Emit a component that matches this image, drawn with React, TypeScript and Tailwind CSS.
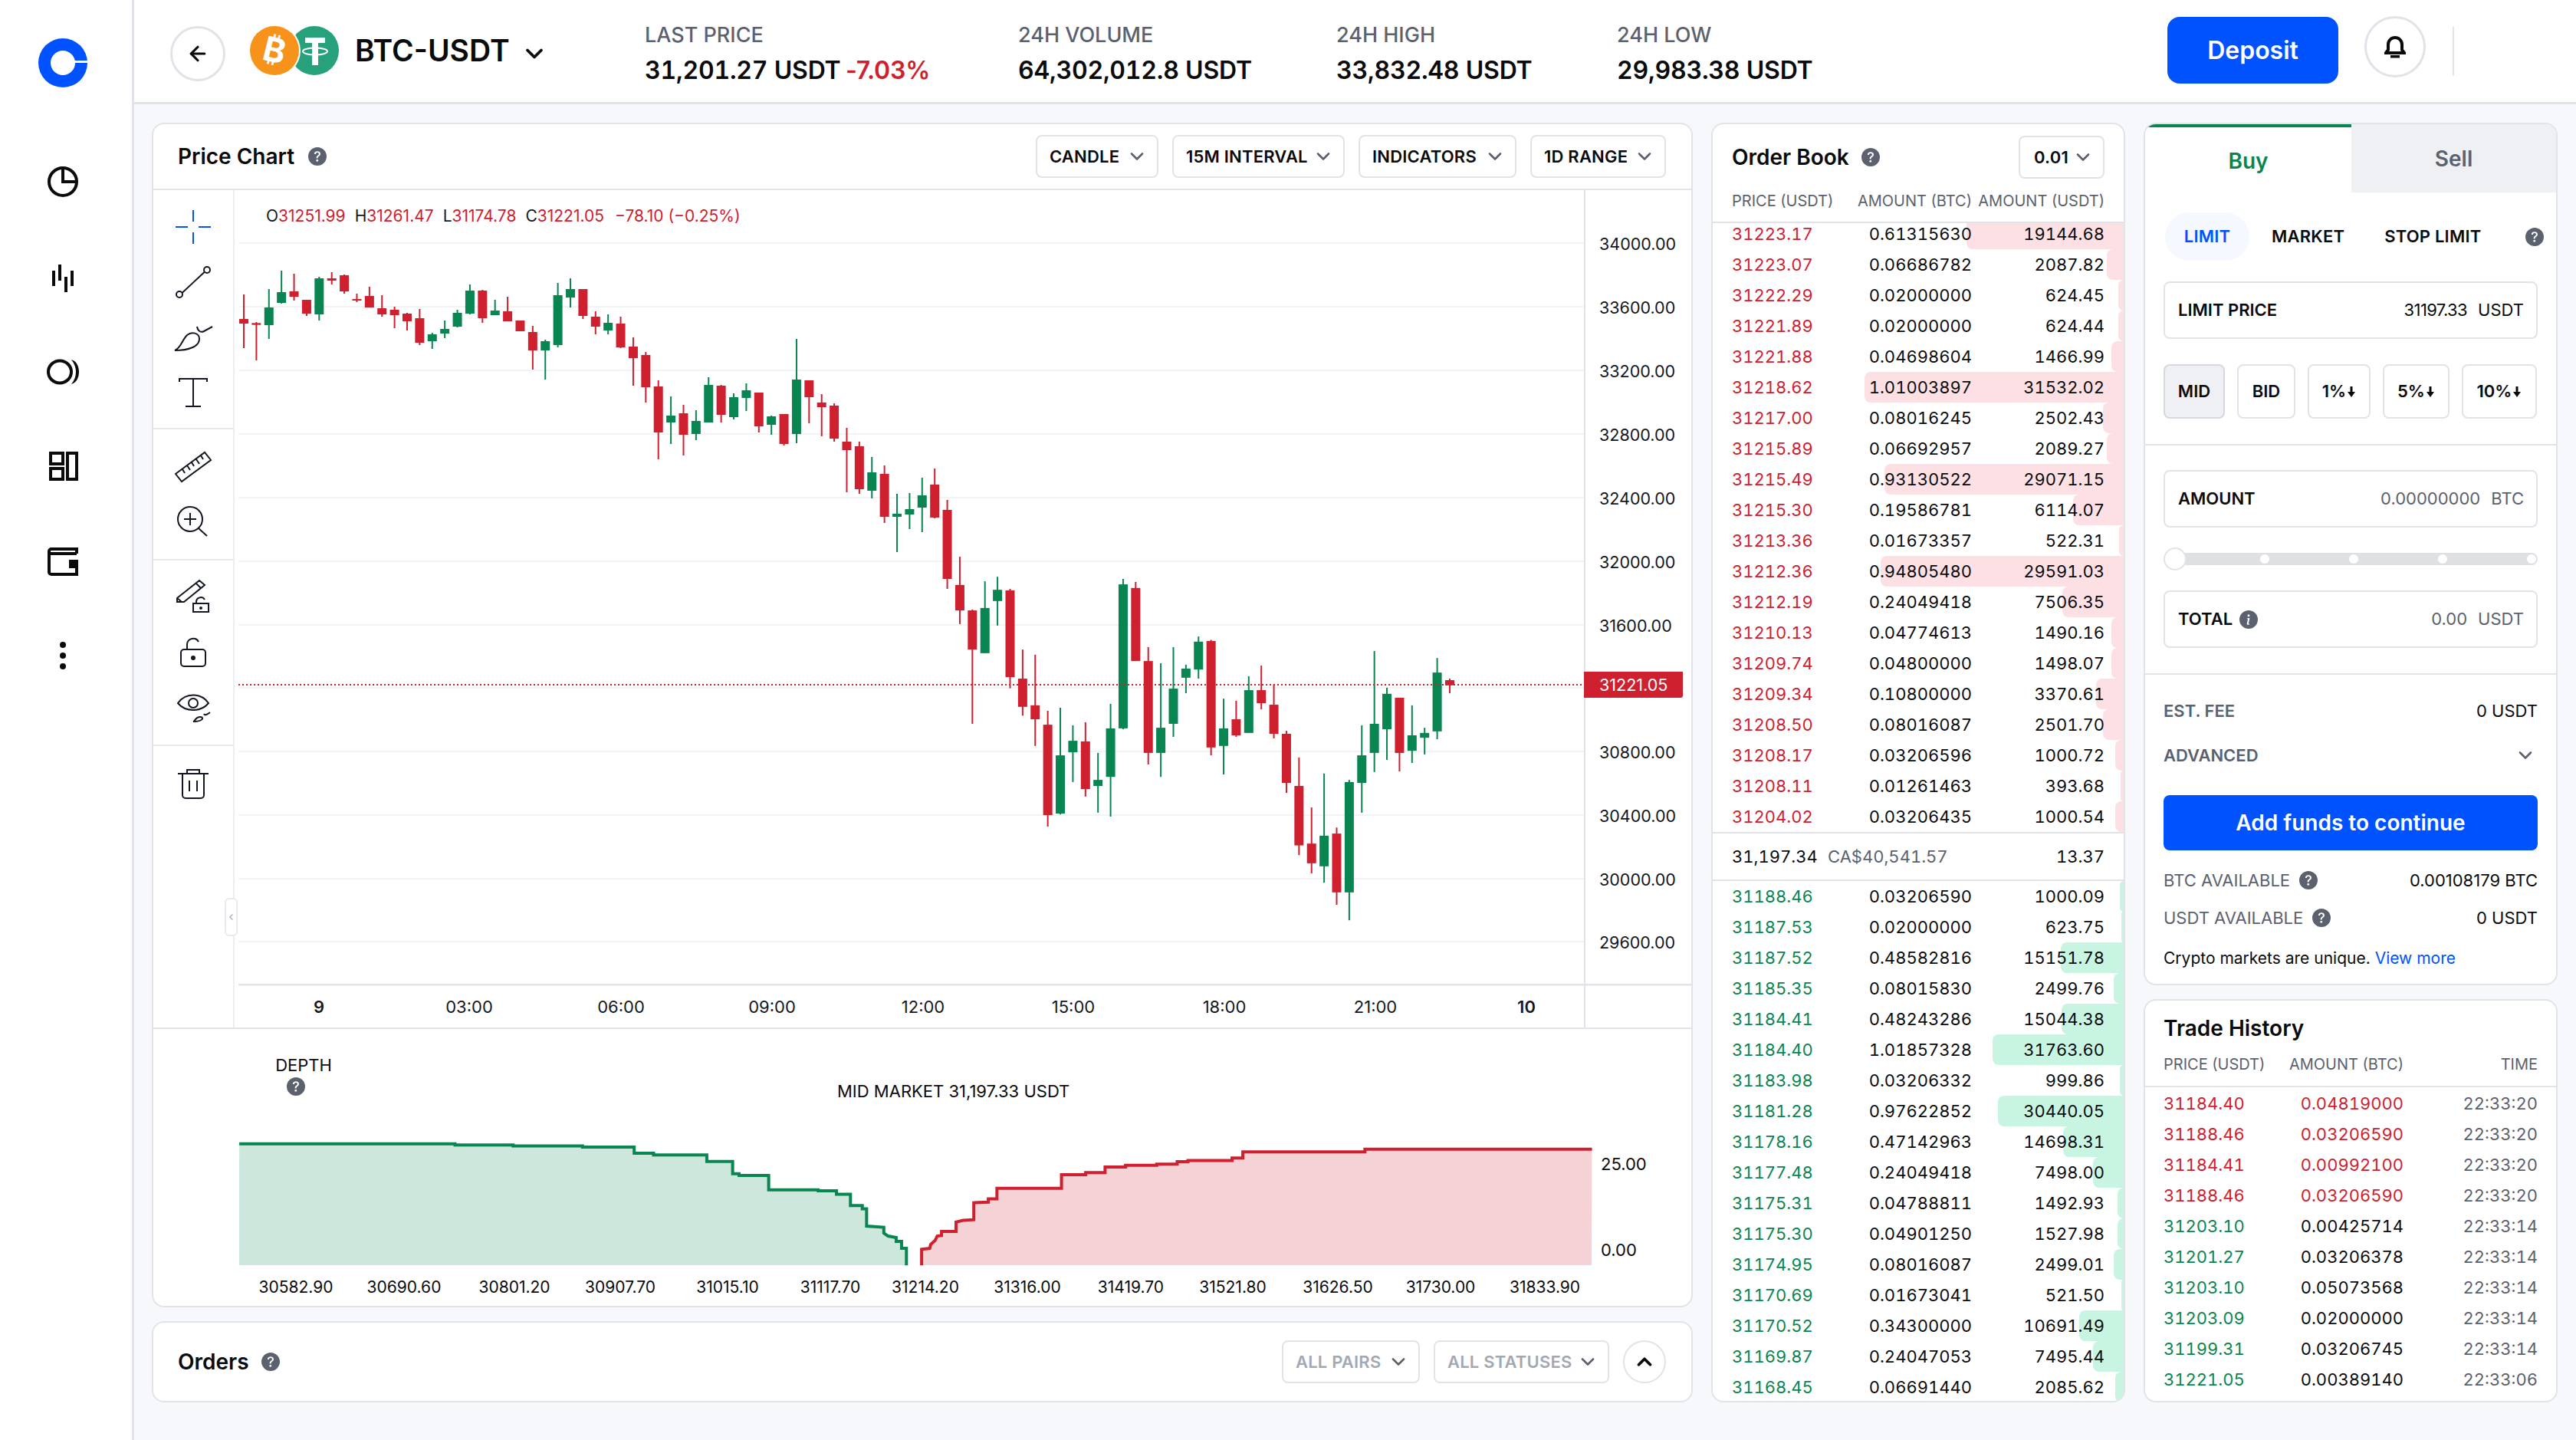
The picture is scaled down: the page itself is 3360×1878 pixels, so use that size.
import { BsInfoCircleFill, BsQuestionCircleFill } from 'react-icons/bs'
import { ArrowLeft, ChevronDown, ChevronLeft, ChevronUp } from 'lucide-react'

// candle rows: [green?, wick top, body top, body bottom, wick bottom], as measured off the chart
type Candle = [number, number, number, number, number]
const firstCandles: Candle[] = [
  [0,192,288,306,402],[0,300,304,311,450],[1,171,243,312,366],[1,99,183,225,228],[0,111,180,201,216],
  [0,213,213,267,276],[1,123,129,270,294],[0,105,129,138,153],[0,114,117,180,189],[0,189,210,216,222],
  [0,162,198,243,243],[0,195,246,270,279],[0,240,252,273,324],[0,264,267,297,333],[0,249,285,381,390],
  [1,342,348,375,405],[1,294,327,345,363],[1,252,264,318,321],[1,153,177,267,270],[0,174,177,285,303],
  [1,213,255,273,273],[0,201,258,297,297],[0,294,294,336,336],[0,315,339,411,486],[1,369,375,411,525],
  [1,147,195,390,399],[1,129,171,204,243],[0,171,171,276,288],[0,258,279,318,348],[1,270,303,333,348],
  [0,279,306,399,402],[0,360,396,441,549],[0,417,429,555,615],[0,528,552,732,837],[1,591,666,693,777],
  [0,624,657,741,822],[1,645,687,738,762],[1,516,546,693,693],[0,546,549,663,693],[1,579,594,672,681],
  [1,540,567,597,648],[0,576,576,708,732],[1,666,669,702,741],[0,660,660,777,783],[1,366,525,738,774],
  [0,528,528,594,696],[0,582,615,633,747],[0,618,627,756,768],
]
const midCandles: Candle[] = [
  [0,414,468,501,666],[0,468,486,654,672],[1,528,588,660,690],[0,561,594,762,786],[1,672,750,762,900],
  [1,669,732,753,810],[1,609,678,726,822],[0,573,636,765,768],[0,696,735,1005,1044],
]
const lastCandles: Candle[] = [
  [0,66,159,243,288],[0,240,243,372,617],[1,147,235,384,384],[1,132,175,212,293],[0,172,177,463,500],
  [0,372,468,561,590],[0,389,556,602,690],[0,574,620,918,956],[1,564,721,913,916],[1,622,673,711,809],
  [0,612,675,832,857],[1,713,802,822,910],[1,551,632,792,923],[1,139,157,632,635],[0,149,169,410,410],
  [0,364,410,713,751],[1,417,630,713,792],[1,364,501,617,660],[1,422,435,465,516],[1,329,346,438,468],
  [0,340,344,695,721],[1,534,632,690,784],[0,541,602,655,660],[1,460,506,647,647],[0,425,506,549,569],
  [0,487,554,650,665],[0,640,650,812,845],[0,728,822,1018,1050],[0,893,1012,1077,1110],[1,781,986,1087,1141],
  [0,959,979,1173,1214],[1,802,809,1173,1265],[1,622,721,812,910],[1,377,617,713,776],[1,498,518,635,736],
  [0,531,531,713,774],[1,556,655,706,746],[1,630,647,663,718],[1,400,448,642,668],[0,468,473,490,516],
]
const conv = (c: Candle, off: number, sc: number) =>
  [c[0], off + c[1] / sc, off + c[2] / sc, off + c[3] / sc, off + c[4] / sc]
const candles = [
  ...firstCandles.map((c) => conv(c, 320, 3)),
  ...midCandles.map((c) => conv(c, 420, 3)),
  ...lastCandles.map((c) => conv(c, 700, 2.529)),
]

const gridY = [317, 400, 483, 566, 649, 732, 815, 897, 980, 1063, 1146, 1228]
const priceLabels = ['34000.00','33600.00','33200.00','32800.00','32400.00','32000.00','31600.00','','30800.00','30400.00','30000.00','29600.00']
const timeLabels: [string, number, boolean][] = [
  ['9',416,true],['03:00',612,false],['06:00',810,false],['09:00',1007,false],['12:00',1204,false],
  ['15:00',1400,false],['18:00',1597,false],['21:00',1794,false],['10',1991,true],
]
const depthLabels: [string, number][] = [
  ['30582.90',386],['30690.60',527],['30801.20',671],['30907.70',809],['31015.10',949],['31117.70',1083],
  ['31214.20',1207],['31316.00',1340],['31419.70',1475],['31521.80',1608],['31626.50',1745],['31730.00',1879],['31833.90',2015],
]

const greenSteps = [[174,555],[575,555],[575,559],[683,559],[683,562],[812,562],[812,566],[908,566],[908,587],[944,587],[944,593],[1043,593],[1043,615],[1091,615],[1091,657],[1103,657],[1103,663],[1158,663],[1158,712],[1250,712],[1250,715],[1284,715],[1284,727],[1310,727],[1310,766],[1332,766],[1332,777],[1340,777],[1340,836],[1372,840],[1372,860],[1380,870],[1395,875],[1395,888],[1405,888],[1405,912],[1414,912],[1414,970]]
const redSteps = [[3,970],[3,915],[18,912],[20,898],[28,885],[32,870],[40,868],[40,854],[67,854],[67,822],[80,816],[100,814],[100,756],[127,754],[127,743],[143,743],[143,707],[263,707],[263,660],[308,660],[308,653],[344,653],[344,634],[382,634],[382,628],[440,628],[440,624],[478,624],[478,616],[498,616],[498,612],[580,612],[580,603],[600,603],[600,582],[827,582],[827,573],[1249,573]]
const greenPts = greenSteps.map(([x, y]) => `${190 + x / 1.425},${1280 + y / 2.62}`).join(' ')
const redPts = redSteps.map(([x, y]) => `${1200 + x / 1.425},${1280 + y / 2.62}`).join(' ')

const asks = [
  ['31223.17','0.61315630','19144.68'],['31223.07','0.06686782','2087.82'],['31222.29','0.02000000','624.45'],
  ['31221.89','0.02000000','624.44'],['31221.88','0.04698604','1466.99'],['31218.62','1.01003897','31532.02'],
  ['31217.00','0.08016245','2502.43'],['31215.89','0.06692957','2089.27'],['31215.49','0.93130522','29071.15'],
  ['31215.30','0.19586781','6114.07'],['31213.36','0.01673357','522.31'],['31212.36','0.94805480','29591.03'],
  ['31212.19','0.24049418','7506.35'],['31210.13','0.04774613','1490.16'],['31209.74','0.04800000','1498.07'],
  ['31209.34','0.10800000','3370.61'],['31208.50','0.08016087','2501.70'],['31208.17','0.03206596','1000.72'],
  ['31208.11','0.01261463','393.68'],['31204.02','0.03206435','1000.54'],
]
const bids = [
  ['31188.46','0.03206590','1000.09'],['31187.53','0.02000000','623.75'],['31187.52','0.48582816','15151.78'],
  ['31185.35','0.08015830','2499.76'],['31184.41','0.48243286','15044.38'],['31184.40','1.01857328','31763.60'],
  ['31183.98','0.03206332','999.86'],['31181.28','0.97622852','30440.05'],['31178.16','0.47142963','14698.31'],
  ['31177.48','0.24049418','7498.00'],['31175.31','0.04788811','1492.93'],['31175.30','0.04901250','1527.98'],
  ['31174.95','0.08016087','2499.01'],['31170.69','0.01673041','521.50'],['31170.52','0.34300000','10691.49'],
  ['31169.87','0.24047053','7495.44'],['31168.45','0.06691440','2085.62'],
]
const trades = [
  ['31184.40','0.04819000','22:33:20',0],['31188.46','0.03206590','22:33:20',0],['31184.41','0.00992100','22:33:20',0],
  ['31188.46','0.03206590','22:33:20',0],['31203.10','0.00425714','22:33:14',1],['31201.27','0.03206378','22:33:14',1],
  ['31203.10','0.05073568','22:33:14',1],['31203.09','0.02000000','22:33:14',1],['31199.31','0.03206745','22:33:14',1],
  ['31221.05','0.00389140','22:33:06',1],
]

const Help = ({ size = 24 }: { size?: number }) => <BsQuestionCircleFill size={size} className="text-[#5b616e] shrink-0" />

function SideIcon({ children }: { children: React.ReactNode }) {
  return (
    <svg width="44" height="44" viewBox="0 0 44 44" className="mb-[80px] text-[#0a0b0d]">
      {children}
    </svg>
  )
}

function ToolIcon({ children, className = '' }: { children: React.ReactNode; className?: string }) {
  return (
    <svg width="48" height="48" viewBox="0 0 48 48" fill="none" stroke="currentColor" strokeWidth="2" overflow="visible" className={'text-[#131722] ' + className}>
      {children}
    </svg>
  )
}

function Sidebar() {
  return (
    <aside className="w-[175px] shrink-0 bg-white border-r-[3px] border-[#e1e3e8] flex flex-col items-center pt-[50px] pr-[8px]">
      <svg width="64" height="64" viewBox="0 0 64 64" className="mb-[101px]">
        <circle cx="32" cy="32" r="32" fill="#0052ff" />
        <circle cx="32" cy="32" r="16" fill="#fff" />
        <rect x="32" y="29" width="32" height="3" fill="#fff" />
      </svg>
      <SideIcon>
        <circle cx="22" cy="22" r="18" fill="none" stroke="currentColor" strokeWidth="4" />
        <path d="M22 4V22H40" fill="none" stroke="currentColor" strokeWidth="4" />
      </SideIcon>
      <SideIcon>
        <path d="M8 14h4v20H8zM16 6h4v21h-4zM24 22h4v20h-4zM32 14h4v20h-4z" fill="currentColor" />
      </SideIcon>
      <SideIcon>
        <ellipse cx="18" cy="22" rx="15" ry="14.5" fill="none" stroke="currentColor" strokeWidth="4" />
        <path d="M33 6c7 2 10 9 10 16s-3 14-10 16c4-5 6-10 6-16S37 11 33 6Z" fill="currentColor" />
      </SideIcon>
      <SideIcon>
        <path d="M6 4h16v14H6zM6 24h16v14H6zM28 4h12v34H28z" fill="none" stroke="currentColor" strokeWidth="4" />
      </SideIcon>
      <SideIcon>
        <path d="M40 11H4v24a3 3 0 0 0 3 3h33V30M4 14V8a3 3 0 0 1 3-3h33v6" fill="none" stroke="currentColor" strokeWidth="4" />
        <path d="M30 19h12v11H30z" fill="currentColor" />
      </SideIcon>
      <svg width="10" height="40" viewBox="0 0 10 40" className="text-[#0a0b0d]">
        <circle cx="5" cy="6" r="4" fill="currentColor" />
        <circle cx="5" cy="20" r="4" fill="currentColor" />
        <circle cx="5" cy="34" r="4" fill="currentColor" />
      </svg>
    </aside>
  )
}

function Stat({ label, width, children }: { label: string; width: string; children: React.ReactNode }) {
  return (
    <div className={'shrink-0 mt-[30px] ' + width}>
      <div className="text-[27px] leading-[32px] text-[#5b616e] font-medium">{label}</div>
      <div className="mt-[10px] text-[32px] leading-[40px] font-semibold text-[#0a0b0d] tabular-nums tracking-[-0.2px]">{children}</div>
    </div>
  )
}

function Header() {
  return (
    <header className="h-[136px] shrink-0 bg-white border-b-[3px] border-[#e1e3e8] flex items-start">
      <div className="ml-[47px] w-[619px] shrink-0 flex items-start">
        <button className="mt-[34px] w-[72px] h-[72px] rounded-full border-[3px] border-[#e1e3e8] flex items-center justify-center">
          <ArrowLeft size={30} strokeWidth={2.5} className="text-[#0a0b0d]" />
        </button>
        <svg width="116" height="64" viewBox="0 0 116 64" className="mt-[34px] ml-[32px]">
          <circle cx="84" cy="32" r="32" fill="#26a17b" />
          <path d="M72 15h26v7h-9v29h-8V22h-9z" fill="#fff" />
          <ellipse cx="85" cy="33" rx="16" ry="4.500" fill="none" stroke="#fff" strokeWidth="2" />
          <circle cx="32" cy="32" r="34" fill="#fff" />
          <circle cx="32" cy="32" r="32" fill="#f7931a" />
          <text x="32" y="47" textAnchor="middle" fontSize="44" fontWeight="700" fill="#fff" transform="rotate(14 32 32)">₿</text>
        </svg>
        <span className="mt-[41px] ml-[21px] text-[39px] leading-[50px] font-semibold text-[#0a0b0d]">BTC-USDT</span>
        <ChevronDown size={36} strokeWidth={2.5} className="mt-[52px] ml-[14px] text-[#0a0b0d]" />
      </div>
      <Stat label="LAST PRICE" width="w-[487px]">
        31,201.27 USDT <span className="text-[#cf202f] [font-variant-numeric:normal] -ml-[2px]">-7.03%</span>
      </Stat>
      <Stat label="24H VOLUME" width="w-[415px]">64,302,012.8 USDT</Stat>
      <Stat label="24H HIGH" width="w-[366px]">33,832.48 USDT</Stat>
      <Stat label="24H LOW" width="w-[400px]">29,983.38 USDT</Stat>
      <button className="mt-[22px] ml-auto w-[223px] h-[87px] rounded-[16px] bg-[#0052ff] text-white text-[32px] font-semibold">Deposit</button>
      <button className="mt-[21px] ml-[34px] w-[80px] h-[80px] rounded-full border-[3px] border-[#e1e3e8] flex items-center justify-center">
        <svg width="28" height="30" viewBox="0 0 28 30">
          <path d="M14 3a9 9 0 0 0-9 9v7l-3 4h24l-3-4v-7a9 9 0 0 0-9-9Z" fill="none" stroke="#0a0b0d" strokeWidth="4" />
          <path d="M8 26h12v3.500H8z" fill="#0a0b0d" />
        </svg>
      </button>
      <div className="mt-[35px] ml-[35px] mr-[159px] w-[2px] h-[64px] bg-[#e1e3e8]" />
    </header>
  )
}

function Select({ label, muted = false, className = '' }: { label: string; muted?: boolean; className?: string }) {
  return (
    <div className={'h-[56px] rounded-[8px] border-[2px] border-[#e1e3e8] flex items-center justify-between pl-[16px] pr-[12px] text-[22px] font-semibold tracking-[0.2px] ' + (muted ? 'text-[#a3a8b3] ' : 'text-[#0a0b0d] ') + className}>
      <span>{label}</span>
      <ChevronDown size={28} strokeWidth={2.25} className="text-[#5b616e]" />
    </div>
  )
}

function Toolbar() {
  return (
    <div className="w-[106px] shrink-0 border-r-[2px] border-[#eceef2] flex flex-col items-center">
      <div className="w-full h-[312px] border-b-[2px] border-[#e8eaf0] flex flex-col items-center pt-[24px] gap-[24px]">
        <ToolIcon className="!text-[#0052ff]"><path d="M1 24H17M31 24H47M24 2V17M24 31V46" /></ToolIcon>
        <ToolIcon><circle cx="6" cy="40" r="4" /><circle cx="42" cy="8" r="4" /><path d="M9.500 38 39 10.500" /></ToolIcon>
        <ToolIcon><path d="M0 41c8-3 9-13 16-20 6-5 16-3 16 5 0 10-14 15-32 15Z" /><path d="M29 10c1 6 5 8 9 6l11-6" /></ToolIcon>
        <ToolIcon><path d="M6 10V6H42V10M24 6V42M14 42H34" /></ToolIcon>
      </div>
      <div className="w-full h-[171px] border-b-[2px] border-[#e8eaf0] flex flex-col items-center pt-[24px] gap-[22px]">
        <ToolIcon><path d="M1 34 39 6l8 10L9 44ZM10 28l3 5M16 23l4 6M22 19l3 5M28 15l4 6M34 10l3 5" /></ToolIcon>
        <ToolIcon><circle cx="20" cy="23" r="16" /><path d="M12 23H28M20 15V31M31 35l11 10" /></ToolIcon>
      </div>
      <div className="w-full h-[242px] border-b-[2px] border-[#e8eaf0] flex flex-col items-center pt-[22px] gap-[24px]">
        <ToolIcon><path d="M3 27 32 4l7 6-27 22H3ZM3 27l6 5M28 8l6 6" /><path d="M24 34h20v11H24zM28 34v-3a6 6 0 0 1 11-2" /><circle cx="34" cy="40" r="1" fill="currentColor" /></ToolIcon>
        <ToolIcon><rect x="8" y="22" width="32" height="22" rx="4" /><path d="M16 22v-7a8 8 0 0 1 15-3" /><circle cx="24" cy="33" r="2" fill="currentColor" /></ToolIcon>
        <ToolIcon><path d="M4 20c10-14 30-14 40 0-10 12-30 12-40 0Z" /><circle cx="24" cy="20" r="6" /><path d="M24 44c3-1 3-6 9-6 5 0 5 6-9 6ZM38 34c1 2 3 2 8-2" /></ToolIcon>
      </div>
      <div className="pt-[26px]">
        <ToolIcon><path d="M4 10H44M16 10V5h16v5M10 10v28a4 4 0 0 0 4 4h20a4 4 0 0 0 4-4V10M19 19v14M29 19v14" /></ToolIcon>
      </div>
    </div>
  )
}

function PriceChart() {
  return (
    <div className="relative flex-1">
      {/* viewBox uses page pixels, so candle values read straight off the chart */}
      <svg width="1900" height="1092" viewBox="306 248 1900 1092" className="block">
        {gridY.map((y) => (
          <rect key={y} x="311" y={y - 1} width="1755" height="2" fill="#f2f3f5" />
        ))}
        {candles.map((c, i) => {
          const x = 318 + i * 16.385
          const col = c[0] ? '#098551' : '#cf202f'
          return (
            <g key={i} fill={col}>
              <rect x={x - 1} y={c[1]} width="2" height={c[4] - c[1]} />
              <rect x={x - 6} y={c[2]} width="12" height={c[3] - c[2]} />
            </g>
          )
        })}
        <line x1="311" x2="2066" y1="893" y2="893" stroke="#cf202f" strokeWidth="2" strokeDasharray="2 3" />
        <rect x="311" y="1283" width="1895" height="2.500" fill="#e1e3e8" />
        <rect x="2066" y="248" width="2" height="1092" fill="#e1e3e8" />
        {priceLabels.map((t, i) => (
          <text key={i} x="2086" y={gridY[i] + 9} fontSize="21.500" fill="#131722">{t}</text>
        ))}
        <path d="M2066 876H2195V907a3 3 0 0 1-3 3H2066Z" fill="#cf202f" />
        <text x="2086" y="901" fontSize="21.500" fill="#fff">31221.05</text>
        {timeLabels.map(([t, x, bold]) => (
          <text key={t} x={x} y="1321" textAnchor="middle" fontSize="22" fontWeight={bold ? 600 : 400} fill="#131722">{t}</text>
        ))}
      </svg>
      <div className="absolute left-[41px] top-[20px] text-[21px] leading-[28px] flex gap-[12px] text-[#cf202f] whitespace-nowrap">
        <span><span className="text-[#131722]">O</span>31251.99</span>
        <span><span className="text-[#131722]">H</span>31261.47</span>
        <span><span className="text-[#131722]">L</span>31174.78</span>
        <span><span className="text-[#131722]">C</span>31221.05</span>
        <span className="ml-[2px]">−78.10 (−0.25%)</span>
      </div>
      <div className="absolute -left-[13px] top-[923px] w-[17px] h-[50px] rounded-[6px] bg-white border-[2px] border-[#e8eaf0] flex items-center justify-center">
        <ChevronLeft size={14} className="text-[#a3a8b3]" />
      </div>
    </div>
  )
}

function DepthChart() {
  return (
    <svg width="2006" height="361" viewBox="200 1342 2006 361" className="block">
      <text x="396" y="1397" textAnchor="middle" fontSize="22" fill="#0a0b0d">DEPTH</text>
      <BsQuestionCircleFill x={374} y={1405} size={24} color="#5b616e" />
      <text x="1092" y="1431" fontSize="22" fill="#0a0b0d">MID MARKET 31,197.33 USDT</text>
      <polygon points={`312,1650 ${greenPts} 1183,1650`} fill="#cde7dc" />
      <polyline points={greenPts} fill="none" stroke="#098551" strokeWidth="4" />
      <polygon points={`1202,1650 ${redPts} 2076,1650`} fill="#f5d2d6" />
      <polyline points={redPts} fill="none" stroke="#cf202f" strokeWidth="4" />
      <text x="2088" y="1526" fontSize="22" fill="#0a0b0d">25.00</text>
      <text x="2088" y="1638" fontSize="22" fill="#0a0b0d">0.00</text>
      {depthLabels.map(([t, x]) => (
        <text key={t} x={x} y="1686" textAnchor="middle" fontSize="21" fill="#0a0b0d">{t}</text>
      ))}
    </svg>
  )
}

function BookRow({ row, side }: { row: string[]; side: 'ask' | 'bid' }) {
  const w = parseFloat(row[2]) * (side === 'ask' ? 0.01072 : 0.00538)
  return (
    <div className="relative h-[40px] flex items-center pl-[25px] pr-[25px] text-[22px] tabular-nums">
      <div
        className={'absolute right-0 top-0 h-full rounded-l-[8px] ' + (side === 'ask' ? 'bg-[#fde0e3]' : 'bg-[#c8f5e1]')}
        style={{ width: w }}
      />
      <span className={'relative w-[160px] ' + (side === 'ask' ? 'text-[#cf202f]' : 'text-[#098551]')}>{row[0]}</span>
      <span className="relative w-[153px] text-right text-[#0a0b0d]">{row[1]}</span>
      <span className="relative flex-1 text-right text-[#0a0b0d]">{row[2]}</span>
    </div>
  )
}

function OrderBook() {
  return (
    <section className="w-[540px] h-[1669px] shrink-0 bg-white rounded-[16px] border-[2px] border-[#e1e3e8] flex flex-col overflow-hidden">
      <div className="h-[129px] shrink-0 border-b-[2px] border-[#e1e3e8] px-[25px]">
        <div className="flex items-center h-[86px]">
          <span className="text-[28px] font-semibold text-[#0a0b0d]">Order Book</span>
          <span className="ml-[16px]"><Help /></span>
          <Select label="0.01" className="ml-auto w-[112px] !pl-[18px]" />
        </div>
        <div className="flex text-[20px] text-[#5b616e] leading-[28px] whitespace-nowrap">
          <span className="w-[160px]">PRICE (USDT)</span>
          <span className="w-[153px] text-right">AMOUNT (BTC)</span>
          <span className="flex-1 text-right">AMOUNT (USDT)</span>
        </div>
      </div>
      <div className="h-[794px] shrink-0 overflow-hidden">
        <div className="-mt-[6px]">
          {asks.map((r) => <BookRow key={r[0] + r[1]} row={r} side="ask" />)}
        </div>
      </div>
      <div className="h-[64px] shrink-0 border-y-[2px] border-[#e1e3e8] flex items-center px-[25px] text-[22px] tabular-nums">
        <span className="text-[#0a0b0d] w-[125px]">31,197.34</span>
        <span className="text-[#5b616e]">CA$40,541.57</span>
        <span className="ml-auto text-[#0a0b0d]">13.37</span>
      </div>
      <div className="flex-1 overflow-hidden">
        {bids.map((r) => <BookRow key={r[0] + r[1]} row={r} side="bid" />)}
      </div>
    </section>
  )
}

function Field({ label, value, unit, muted = false, info = false, tight = false }: { label: string; value: string; unit: string; muted?: boolean; info?: boolean; tight?: boolean }) {
  return (
    <div className="h-[75px] rounded-[8px] border-[2px] border-[#e1e3e8] flex items-center pl-[17px] pr-[16px] text-[22px]">
      <span className="font-semibold text-[#0a0b0d]">{label}</span>
      {info && <BsInfoCircleFill size={24} className="ml-[9px] text-[#5b616e]" />}
      <span className={'ml-auto ' + (muted ? 'text-[#5b616e]' : 'text-[#0a0b0d]') + (tight ? ' tracking-[-0.6px]' : '')}>{value}</span>
      <span className={'ml-[14px] ' + (muted ? 'text-[#5b616e]' : 'text-[#0a0b0d]')}>{unit}</span>
    </div>
  )
}

function PctBtn({ label, width, active = false, arrow = false }: { label: string; width: string; active?: boolean; arrow?: boolean }) {
  return (
    <button className={'h-[71px] rounded-[8px] border-[2px] flex items-center justify-center text-[22px] font-semibold text-[#0a0b0d] ' + width + (active ? ' bg-[#eef0f3] border-[#d5d8de]' : ' border-[#e1e3e8]')}>
      {label}
      {arrow && (
        <svg width="12" height="16" viewBox="0 0 12 16" className="ml-[1px]">
          <path d="M4.500 1h3v7H11l-5 7-5-7h3.500z" fill="#0a0b0d" />
        </svg>
      )}
    </button>
  )
}

function BuyPanel() {
  return (
    <section className="h-[1125px] bg-white rounded-[16px] border-[2px] border-[#e1e3e8] flex flex-col overflow-hidden">
      <div className="flex h-[89px] shrink-0 text-[28px] font-semibold">
        <div className="w-[269px] border-t-[4px] border-[#098551] flex items-center justify-center text-[#098551] pt-[2px]">Buy</div>
        <div className="flex-1 bg-[#eef0f3] flex items-center justify-center text-[#5b616e]">Sell</div>
      </div>
      <div className="px-[24px] flex flex-col">
        <div className="mt-[26px] flex items-center h-[63px] text-[22px] font-semibold text-[#0a0b0d] tracking-[0.2px]">
          <span className="ml-[2px] w-[110px] h-[63px] rounded-full bg-[#f5f8ff] text-[#0052ff] flex items-center justify-center">LIMIT</span>
          <span className="ml-[29px]">MARKET</span>
          <span className="ml-[52px]">STOP LIMIT</span>
          <span className="ml-auto -mr-[8px]"><Help /></span>
        </div>
        <div className="mt-[27px]"><Field label="LIMIT PRICE" value="31197.33" unit="USDT" tight /></div>
        <div className="mt-[33px] flex gap-[16px]">
          <PctBtn label="MID" width="w-[80px]" active />
          <PctBtn label="BID" width="w-[76px]" />
          <PctBtn label="1%" width="w-[82px]" arrow />
          <PctBtn label="5%" width="w-[87px]" arrow />
          <PctBtn label="10%" width="w-[98px]" arrow />
        </div>
      </div>
      <div className="mt-[33px] h-[2px] bg-[#e1e3e8] shrink-0" />
      <div className="px-[24px] flex flex-col">
        <div className="mt-[32px]"><Field label="AMOUNT" value="0.00000000" unit="BTC" muted /></div>
        <div className="mt-[33px] relative h-[16px] rounded-full bg-[#dee0e4] flex items-center justify-end gap-[104px] pr-[2px]">
          <i className="w-[12px] h-[12px] rounded-full bg-white" />
          <i className="w-[12px] h-[12px] rounded-full bg-white" />
          <i className="w-[12px] h-[12px] rounded-full bg-white" />
          <i className="w-[12px] h-[12px] rounded-full bg-white" />
          <i className="absolute left-0 -top-[7px] w-[30px] h-[30px] rounded-full bg-white border-[2px] border-[#e1e3e8]" />
        </div>
        <div className="mt-[33px]"><Field label="TOTAL" value="0.00" unit="USDT" muted info /></div>
      </div>
      <div className="mt-[33px] h-[2px] bg-[#e1e3e8] shrink-0" />
      <div className="px-[24px] flex flex-col text-[22px]">
        <div className="mt-[32px] h-[30px] flex items-center justify-between">
          <span className="font-semibold text-[#5b616e]">EST. FEE</span>
          <span className="text-[#0a0b0d]">0 USDT</span>
        </div>
        <div className="mt-[28px] h-[30px] flex items-center justify-between">
          <span className="font-semibold text-[#5b616e]">ADVANCED</span>
          <ChevronDown size={28} strokeWidth={2.25} className="text-[#5b616e] mr-[2px]" />
        </div>
        <button className="mt-[37px] h-[72px] rounded-[8px] bg-[#0052ff] text-white text-[28px] font-semibold">Add funds to continue</button>
        <div className="mt-[24px] h-[30px] flex items-center">
          <span className="text-[#5b616e]">BTC AVAILABLE</span>
          <span className="ml-[12px]"><Help /></span>
          <span className="ml-auto text-[#0a0b0d]">0.00108179 BTC</span>
        </div>
        <div className="mt-[19px] h-[30px] flex items-center">
          <span className="text-[#5b616e]">USDT AVAILABLE</span>
          <span className="ml-[12px]"><Help /></span>
          <span className="ml-auto text-[#0a0b0d]">0 USDT</span>
        </div>
        <p className="mt-[23px] leading-[30px] text-[21px] text-[#0a0b0d]">
          Crypto markets are unique. <span className="text-[#0052ff]">View more</span>
        </p>
      </div>
    </section>
  )
}

function TradeHistory() {
  return (
    <section className="flex-1 bg-white rounded-[16px] border-[2px] border-[#e1e3e8] overflow-hidden">
      <div className="h-[113px] border-b-[2px] border-[#e1e3e8] px-[24px]">
        <div className="pt-[18px] text-[28px] leading-[36px] font-semibold text-[#0a0b0d]">Trade History</div>
        <div className="flex mt-[15px] text-[20px] leading-[28px] text-[#5b616e] whitespace-nowrap">
          <span className="w-[160px]">PRICE (USDT)</span>
          <span className="w-[153px] text-right">AMOUNT (BTC)</span>
          <span className="flex-1 text-right">TIME</span>
        </div>
      </div>
      <div className="px-[24px] pt-[1px]">
        {trades.map((t, i) => (
          <div key={i} className="h-[40px] flex items-center text-[22px] tabular-nums">
            <span className={'w-[160px] ' + (t[3] ? 'text-[#098551]' : 'text-[#cf202f]')}>{t[0]}</span>
            <span className={'w-[153px] text-right ' + (t[3] ? 'text-[#0a0b0d]' : 'text-[#cf202f]')}>{t[1]}</span>
            <span className="flex-1 text-right text-[#5b616e]">{t[2]}</span>
          </div>
        ))}
      </div>
    </section>
  )
}

export default function App() {
  return (
    <div className="w-[3360px] h-[1878px] flex bg-[#f7f8fc] overflow-hidden [font-family:Inter,sans-serif]">
      <Sidebar />
      <div className="flex-1 flex flex-col min-w-0">
        <Header />
        <main className="flex gap-[24px] pl-[23px] pt-[24px]">
          <div className="w-[2010px] shrink-0 flex flex-col gap-[18px]">
            <section className="h-[1545px] bg-white rounded-[16px] border-[2px] border-[#e1e3e8] flex flex-col overflow-hidden">
              <div className="h-[86px] shrink-0 border-b-[2px] border-[#e1e3e8] flex items-center pl-[32px] pr-[33px] gap-[18px]">
                <span className="text-[28px] font-semibold text-[#0a0b0d]">Price Chart</span>
                <Help />
                <Select label="CANDLE" className="ml-auto w-[160px]" />
                <Select label="15M INTERVAL" className="w-[225px]" />
                <Select label="INDICATORS" className="w-[206px]" />
                <Select label="1D RANGE" className="w-[177px]" />
              </div>
              <div className="h-[1092px] shrink-0 flex">
                <Toolbar />
                <PriceChart />
              </div>
              <div className="flex-1 border-t-[2px] border-[#e1e3e8]"><DepthChart /></div>
            </section>
            <section className="h-[106px] bg-white rounded-[16px] border-[2px] border-[#e1e3e8] flex items-center pl-[32px] pr-[33px]">
              <span className="text-[28px] font-semibold text-[#0a0b0d]">Orders</span>
              <span className="ml-[16px]"><Help /></span>
              <Select label="ALL PAIRS" muted className="ml-auto w-[180px]" />
              <Select label="ALL STATUSES" muted className="ml-[18px] w-[229px]" />
              <button className="ml-[18px] w-[56px] h-[56px] rounded-full border-[2px] border-[#e1e3e8] flex items-center justify-center">
                <ChevronUp size={30} strokeWidth={3} className="text-[#0a0b0d]" />
              </button>
            </section>
          </div>
          <OrderBook />
          <div className="w-[540px] h-[1669px] shrink-0 flex flex-col gap-[18px]">
            <BuyPanel />
            <TradeHistory />
          </div>
        </main>
      </div>
    </div>
  )
}
